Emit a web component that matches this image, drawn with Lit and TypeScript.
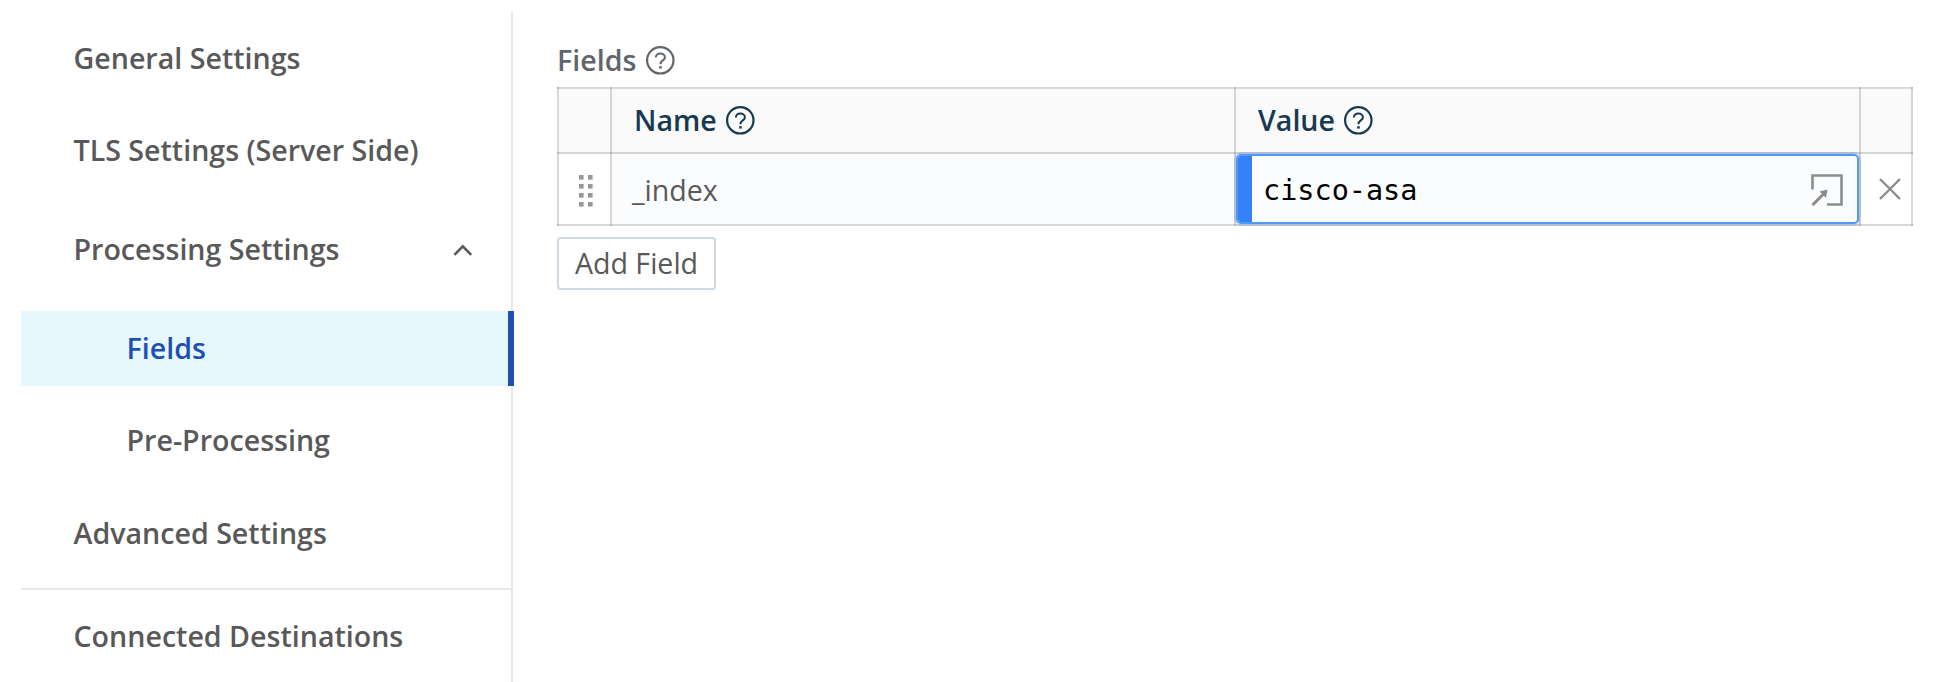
import { LitElement, html, css, svg } from "lit";
import { customElement, property } from "lit/decorators.js";

@customElement("help-icon")
class HelpIcon extends LitElement {
  static styles = css`
    :host { display: block; width: 29px; height: 29px; }
    svg { display: block; }
  `;
  render() {
    return html`<svg width="29" height="29" viewBox="0 0 29 29" fill="none" stroke="currentColor">
      <circle cx="14.3" cy="14.3" r="13.2" stroke-width="2.2" />
      <path d="M9.8 11.6C9.8 8.9 11.9 7.6 14.3 7.6S18.9 9 18.9 11.4C18.9 14.3 14.5 14.5 14.5 17.8V18.2" stroke-width="2" />
      <rect x="13.2" y="20.2" width="2.6" height="2.4" fill="currentColor" stroke="none" />
    </svg>`;
  }
}

@customElement("side-item")
class SideItem extends LitElement {
  @property() label = "";
  @property({ type: Boolean, reflect: true }) sub = false;
  @property({ type: Boolean, reflect: true }) active = false;
  @property({ type: Boolean }) expanded = false;
  static styles = css`
    :host {
      display: flex; align-items: center; justify-content: space-between;
      box-sizing: border-box; height: 75px; padding: 0 32px 0 52.5px;
      font-weight: 600; color: #595959; white-space: nowrap;
    }
    :host([sub]) { padding-left: 105.5px; }
    :host([active]) {
      margin-right: -3px; color: #1d50b0; background: #e7f7fe; border-right: 6px solid #1d50b0;
    }
    span { padding-bottom: 2px; }
    svg { display: block; margin-right: 6px; }
  `;
  render() {
    return html`<span>${this.label}</span>${this.expanded
      ? html`<svg width="20" height="12" viewBox="0 0 20 12" fill="none" stroke="#595959" stroke-width="2.6"><path d="M1.4 10.8 9.8 2.4 18.2 10.8" /></svg>`
      : null}`;
  }
}

@customElement("app-root")
class AppRoot extends LitElement {
  static styles = css`
    :host {
      display: flex; align-items: flex-start; box-sizing: border-box; height: 682px; overflow: hidden;
      background: #fff; font: 28.6px/38px "Open Sans", sans-serif; color: #595959;
    }
    nav {
      flex: none; box-sizing: border-box; width: 492px; height: 670px; margin: 12px 0 0 21px; padding-top: 9px;
      display: flex; flex-direction: column; border-right: 2px solid #e8e8e8;
    }
    side-item { flex: none; margin-bottom: 17px; }
    .gap24 { margin-bottom: 24px; }
    .gap18 { margin-bottom: 18px; }
    .rule { flex: none; height: 2px; background: #e8e8e8; margin-bottom: 9px; }
    main { flex: none; margin: 41px 0 0 44px; width: 1356px; }
    .title { display: flex; align-items: center; gap: 10px; height: 38px; margin-bottom: 8px; font-weight: 600; color: #5f666b; }
    .grid {
      --line: rgba(0, 0, 0, 0.15);
      --rule: linear-gradient(var(--line), var(--line));
      position: relative; box-sizing: border-box; width: 1356px; height: 139px; padding: 2px 0 0 2px;
      display: grid; grid-template-columns: 53px 624px 625px 52px; grid-template-rows: 65px 72px;
    }
    .grid::before {
      content: ""; position: absolute; inset: 0; pointer-events: none;
      background:
        var(--rule) 0 0 / 100% 2px, var(--rule) 0 65px / 100% 2px, var(--rule) 0 137px / 100% 2px,
        var(--rule) 0 0 / 2px 100%, var(--rule) 53px 0 / 2px 100%, var(--rule) 677px 0 / 2px 100%,
        var(--rule) 1302px 0 / 2px 100%, var(--rule) 1354px 0 / 2px 100%;
      background-repeat: no-repeat;
    }
    .cell { box-sizing: border-box; display: flex; align-items: center; padding: 0 2px 2px 0; }
    .head { background: #fafafa; font-weight: 600; color: #173a52; gap: 9px; padding-left: 22px; }
    .head span { padding-bottom: 2px; }
    .name { background: #fbfcfe; padding: 0 2px 0 20px; }
    .mid { justify-content: center; }
    .drag { margin: 3px 0 0 2px; }
    .close { margin-left: 7px; }
    .editor {
      box-sizing: border-box; flex: 1; height: 70px; display: flex; align-items: center;
      background: #fbfcfe; border: 2px solid #4d9af8; border-radius: 5px; overflow: hidden;
      box-shadow: 0 0 0 2px rgba(60, 120, 230, 0.22);
    }
    .bar { width: 14px; align-self: stretch; background: #3582f8; }
    .code { flex: 1; padding: 3px 0 0 11px; font: 28.5px/38px "DejaVu Sans Mono", monospace; color: #000; }
    .editor svg { margin: 1px 14px 0 0; }
    svg { display: block; }
    button {
      display: block; box-sizing: border-box; width: 159px; height: 53px; margin-top: 11px; padding: 0 0 2px;
      font: inherit; color: #595959; background: #fff; border: 2px solid #cfd9e2; border-radius: 4px;
      box-shadow: 0 4px 0 rgba(0, 0, 0, 0.016); white-space: nowrap;
    }
  `;
  render() {
    return html`
      <nav>
        <side-item label="General Settings"></side-item>
        <side-item class="gap24" label="TLS Settings (Server Side)"></side-item>
        <side-item class="gap24" label="Processing Settings" expanded></side-item>
        <side-item label="Fields" sub active></side-item>
        <side-item class="gap18" label="Pre-Processing" sub></side-item>
        <side-item label="Advanced Settings"></side-item>
        <div class="rule"></div>
        <side-item label="Connected Destinations"></side-item>
      </nav>
      <main>
        <div class="title"><span>Fields</span><help-icon></help-icon></div>
        <div class="grid">
          <div class="cell head"></div>
          <div class="cell head"><span>Name</span><help-icon></help-icon></div>
          <div class="cell head"><span>Value</span><help-icon></help-icon></div>
          <div class="cell head"></div>
          <div class="cell mid">
            <svg class="drag" width="14" height="32" viewBox="0 0 14 32" fill="#979797">
              ${[0, 9, 18, 27].map((y) => svg`<rect x="0" y=${y} width="4.6" height="4.6" /><rect x="9" y=${y} width="4.6" height="4.6" />`)}
            </svg>
          </div>
          <div class="cell name">_index</div>
          <div class="cell">
            <div class="editor">
              <div class="bar"></div>
              <div class="code">cisco-asa</div>
              <svg width="32" height="32" viewBox="0 0 32 32" fill="none" stroke="#8c8c8c" stroke-width="2.6">
                <path d="M1.5 15.5V1.5H30.5V30.5H16" />
                <path d="M1.5 31 12.5 20" stroke-width="3" />
                <path d="M8.5 17.5 16.5 15.5 15 24Z" fill="#8c8c8c" stroke="none" />
              </svg>
            </div>
          </div>
          <div class="cell mid">
            <svg class="close" width="22" height="22" viewBox="0 0 22 22" stroke="#8c8c8c" stroke-width="2.4"><path d="M1 1 21 21M21 1 1 21" /></svg>
          </div>
        </div>
        <button>Add Field</button>
      </main>`;
  }
}
